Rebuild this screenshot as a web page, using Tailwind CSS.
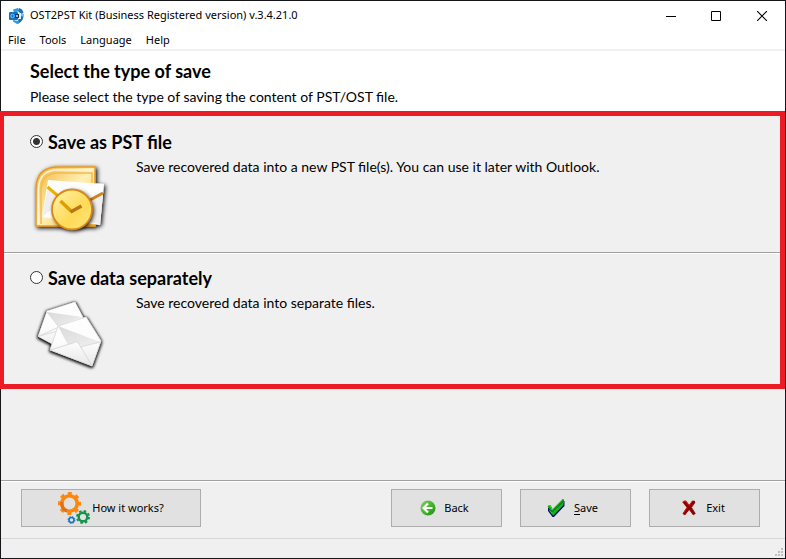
<!DOCTYPE html>
<html lang="en">
<head>
<meta charset="utf-8">
<title>OST2PST Kit</title>
<script src="https://cdn.jsdelivr.net/npm/@tailwindcss/browser@4"></script>
</head>
<body class="bg-[#f0f0f0] text-black">
<div class="flex min-h-screen flex-col border border-[#15151a] bg-[#f0f0f0] font-['Noto_Sans',sans-serif] text-[11px]">

  <header class="flex h-[29px] items-center bg-white pl-2">
    <svg class="size-4 shrink-0" viewBox="0 0 16 16" aria-hidden="true">
      <path d="M4 1.500 9 0l1 3-5 2zM4 12l5 1 1 2.500L8 16l-4-2.500z" fill="#2f9be0"/>
      <path d="M10 0q4 1 4.500 5L12 6 9 3zM14.500 8q0 5-5 7.500L9 12l3-4z" fill="#1673bd"/>
      <path d="M12 5.500 15 6v3l-3-1z" fill="#74bdea"/>
      <rect y="4" width="9" height="8" rx="1" fill="#0f72c6"/>
      <circle cx="3.500" cy="8" r="1.700" fill="none" stroke="#7ac4f5"/>
      <rect x="9" y="5" width="3" height="6" fill="#e4f0f8"/>
      <rect x="6" y="6" width="4" height="4" fill="#17365c"/>
      <path d="M7 7h2v2H7z" fill="#9cb4c8"/>
    </svg>
    <h1 class="ml-[5px] flex-1 whitespace-nowrap">OST2PST Kit (Business Registered version) v.3.4.21.0</h1>
    <div class="flex h-full">
      <button type="button" aria-label="Minimize" class="grid w-[45px] place-items-center">
        <svg width="10" height="10" viewBox="0 0 10 10"><path d="M0 5h10v1H0z"/></svg>
      </button>
      <button type="button" aria-label="Maximize" class="grid w-[46px] place-items-center">
        <svg width="10" height="10" viewBox="0 0 10 10"><path d="M.5.5h9v9h-9z" fill="none" stroke="#000"/></svg>
      </button>
      <button type="button" aria-label="Close" class="grid w-[46px] place-items-center">
        <svg width="10" height="10" viewBox="0 0 10 10"><path d="m0 0 10 10M10 0 0 10" fill="none" stroke="#000" stroke-width="1.100"/></svg>
      </button>
    </div>
  </header>

  <nav class="flex h-[21px] items-center gap-[14px] border-b-2 border-[#f0f0f0] bg-white pt-[2px] pl-[7px]" aria-label="Menu">
    <button type="button">File</button>
    <button type="button">Tools</button>
    <button type="button">Language</button>
    <button type="button">Help</button>
  </nav>

  <main class="flex flex-1 flex-col font-[Lato,sans-serif] text-[14px]">
    <div class="bg-white pt-2 pb-1 pl-[29px]">
      <h2 class="text-[18px] leading-6 font-bold">Select the type of save</h2>
      <p class="pt-1 leading-5 whitespace-nowrap">Please select the type of saving the content of PST/OST file.</p>
    </div>

    <div role="radiogroup" aria-label="Type of save" class="-ml-px border-x-[5px] border-y-[5px] border-l-4 border-[#ed1c24]">
      <section class="border-b border-[#a0a0a0] pt-[14px] pb-2 pl-[26px]">
        <div class="flex h-6 items-center gap-[5px]">
          <input id="pst" name="type" type="radio" checked aria-describedby="pst-d" class="mb-[2px] size-[13px] appearance-none rounded-full border border-[#333] bg-white bg-[radial-gradient(circle,#333_0_3px,#fff_4px)]">
          <label for="pst" class="text-[18px] leading-6 font-bold">Save as PST file</label>
        </div>
        <div class="flex">
          <div class="w-[106px] shrink-0">
            <svg class="h-[90px] w-20" viewBox="10 -1 80 90" aria-hidden="true">
              <defs>
                <linearGradient id="tile" x1="0" y1="0" x2="1" y2="1"><stop stop-color="#f2b43c"/><stop offset=".5" stop-color="#fff0b4"/><stop offset="1" stop-color="#f4b33a"/></linearGradient>
                <linearGradient id="face" x1="0" y1="0" x2="1" y2="1"><stop stop-color="#fff3a9"/><stop offset=".6" stop-color="#ffda57"/><stop offset="1" stop-color="#ffe982"/></linearGradient>
                <filter id="sh" x="-20%" y="-20%" width="150%" height="150%"><feDropShadow dx="1.500" dy="1.500" stdDeviation="2" flood-opacity="1"/></filter>
              </defs>
              <g filter="url(#sh)">
                <path d="M16 71V34Q16 12 38 12H75V71Z" fill="url(#tile)" stroke="#e79a22" stroke-width="1.500"/>
                <path d="M18.500 69V35Q18.500 15 38 15H73" fill="none" stroke="#fff6dd" stroke-width="1.500"/>
                <path d="M21 69V36Q21 18 39 18H72V28" fill="none" stroke="#f5bc4c" stroke-width="1.500"/>
                <path d="m28 25 56 4-4 41-58-8z" fill="#fdfdfd"/>
              </g>
              <path d="m28 33 16 12-22 17zM68 48l15-9-3 30-18-3z" fill="#f0eeee"/>
              <path d="m27.500 32 13 11" stroke="#edb100" stroke-width="3"/>
              <path d="m70 45 13-7" stroke="#cf831b" stroke-width="3"/>
              <g filter="url(#sh)"><circle cx="52" cy="54.500" r="20" fill="url(#face)"/></g>
              <circle cx="52" cy="54.500" r="20" fill="url(#face)" stroke="#db8615" stroke-width="1.800"/>
              <path d="m40.500 46 11 10.500" fill="none" stroke="#dba000" stroke-width="3.500"/>
              <path d="m50.500 57 11-6" stroke="#b97517" stroke-width="3.500"/>
            </svg>
          </div>
          <p id="pst-d" class="pt-[3px] leading-5 whitespace-nowrap">Save recovered data into a new PST file(s). You can use it later with Outlook.</p>
        </div>
      </section>
      <section class="border-t border-white pt-3 pb-1 pl-[26px]">
        <div class="flex h-6 items-center gap-[5px]">
          <input id="sep" name="type" type="radio" aria-describedby="sep-d" class="mb-[2px] size-[13px] appearance-none rounded-full border border-[#333] bg-white">
          <label for="sep" class="text-[18px] leading-6 font-bold">Save data separately</label>
        </div>
        <div class="flex">
          <div class="w-[106px] shrink-0">
            <svg class="h-[90px] w-20" viewBox="10 0 80 90" aria-hidden="true">
              <defs>
                <linearGradient id="fold" x1="0" y1="0" x2="1" y2="1"><stop stop-color="#dadada"/><stop offset="1" stop-color="#efefef"/></linearGradient>
                <linearGradient id="paper" x1="0" y1="0" x2="0" y2="1"><stop offset=".5" stop-color="#fdfdfd"/><stop offset="1" stop-color="#e8e8e8"/></linearGradient>
                <filter id="gl" x="-20%" y="-20%" width="140%" height="140%"><feMorphology in="SourceAlpha" operator="dilate" radius=".8"/><feGaussianBlur stdDeviation="1.600"/><feOffset dx=".3" dy=".8" result="s"/><feMerge><feMergeNode in="s"/><feMergeNode in="SourceGraphic"/></feMerge></filter>
              </defs>
              <g filter="url(#gl)">
                <path d="M27 21 55 12l8 15-16 35-29-15.500z" fill="url(#paper)"/>
                <path d="M38 36 66 27l15 24-9 25-42-16z" fill="url(#paper)"/>
              </g>
              <path d="m27 22 35 5-24 9z" fill="url(#fold)"/>
              <path d="m27 22 12 15-21 9.500 18-5" fill="none" stroke="#dcdcdc"/>
              <path d="M38 36 66 27l15 24-9 25-42-16z" fill="url(#paper)" stroke="#d4d4d4" stroke-width=".8"/>
              <path d="m38 36 42 16-18 4-6-4-8 3z" fill="url(#fold)"/>
              <path d="m30 60 23-7q4-3 6 1l13 22M60 57l20-5" fill="none" stroke="#dadada"/>
            </svg>
          </div>
          <p id="sep-d" class="pt-[3px] leading-5 whitespace-nowrap">Save recovered data into separate files.</p>
        </div>
      </section>
    </div>
  </main>

  <footer>
    <div class="border-t border-[#a0a0a0]">
      <div class="flex items-center border-t border-white pt-[7px] pr-[25px] pb-[11px] pl-5">
        <button type="button" class="flex h-[38px] w-[180px] items-center justify-center gap-[2px] border border-[#adadad] bg-[#e1e1e1]">
          <svg class="size-8" viewBox="0 0 32 32" aria-hidden="true">
            <g fill="none">
              <circle cx="11.500" cy="11.500" r="7.700" stroke="#ff860b" stroke-width="3.600"/>
              <circle cx="11.500" cy="11.500" r="10" stroke="#ff860b" stroke-width="3" stroke-dasharray="4 3.854" stroke-dashoffset="2"/>
              <path d="M4 10q-1 7 5 9" stroke="#dc711d" stroke-width="3"/>
              <circle cx="25" cy="25" r="4.300" stroke="#16944e" stroke-width="2.400"/>
              <circle cx="25" cy="25" r="6" stroke="#16944e" stroke-width="2" stroke-dasharray="2.500 2.212"/>
              <circle cx="13.500" cy="28" r="2.500" stroke="#1876bd" stroke-width="1.600"/>
              <circle cx="13.500" cy="28" r="3.500" stroke="#1876bd" stroke-width="1" stroke-dasharray="1.400 1.349"/>
            </g>
          </svg>
          <span>How it works?</span>
        </button>
        <div class="ml-auto flex gap-[18px]">
          <button type="button" class="flex h-[38px] w-[111px] items-center justify-center gap-2 border border-[#adadad] bg-[#e1e1e1] pr-[4px]">
            <svg class="size-4" viewBox="0 0 16 16" aria-hidden="true">
              <defs><linearGradient id="ball" x1="0" y1="0" x2="1" y2="1"><stop stop-color="#7ccf62"/><stop offset=".5" stop-color="#45b72b"/><stop offset="1" stop-color="#178f12"/></linearGradient></defs>
              <circle cx="8" cy="8" r="7.500" fill="url(#ball)"/>
              <path d="M8 3.500 3.500 8 8 12.500M4 8h8.500" fill="none" stroke="#fff" stroke-width="2.200"/>
            </svg>
            <span>Back</span>
          </button>
          <button type="button" class="flex h-[38px] w-[111px] items-center justify-center gap-[9px] border border-[#adadad] bg-[#e1e1e1] pr-[6px]">
            <svg class="h-5 w-[18px]" viewBox="0 0 18 20" aria-hidden="true">
              <path d="m1 10 3-1 2 4L16 3h1.500v5L7 19H5.500L1 13z" fill="#061070"/>
              <path d="m.5 8 3-1 2 4L15.500 1l1.500.5v2.300L6 15.500 4.500 15z" fill="#0b9b12"/>
              <path d="m1.500 11.500 2.500 1.500 2 2L16.500 4.500V7L6.500 17.500l-1.500-1z" fill="#12b018"/>
              <path d="m1 8 2-.5 2 4.500L15.500 1.500M2.500 12.500l3 2.500L16.500 4" fill="none" stroke="#2be52b"/>
              <path d="M2 11.500 5.500 14 16.500 3.500" fill="none" stroke="#045c0b" stroke-width=".7"/>
            </svg>
            <span><u class="underline-offset-2">S</u>ave</span>
          </button>
          <button type="button" class="flex h-[38px] w-[111px] items-center justify-center gap-[10px] border border-[#adadad] bg-[#e1e1e1] pr-[2px]">
            <svg class="h-4 w-[14px]" viewBox="0 0 14 16" aria-hidden="true">
              <path d="M1 1.500 4 .8l3.300 4L10.500.500l2.500.5v1.500L9.300 7.500l4 6-2.300 1.500-3.800-5L3 15.200.700 14l4-6.500L1 3z" fill="#900000"/>
              <path d="M1 3V1.500L3.500.800 7 5.500M1 13.500l4-6M7.500 5 10.500 1" fill="none" stroke="#e31414"/>
              <path d="m13 2.500-3.500 5 3.800 6-2.300 1.500" fill="none" stroke="#5d0505" stroke-width=".7"/>
            </svg>
            <span>Exit</span>
          </button>
        </div>
      </div>
    </div>
    <div class="flex h-5 items-end justify-end border-t border-[#d7d7d7] pr-[2px] pb-[2px]">
      <svg class="size-2" viewBox="0 0 8 8" fill="#bfbfbf" aria-hidden="true"><path d="M6 0h2v2H6zM3 3h2v2H3zM6 3h2v2H6zM0 6h2v2H0zM3 6h2v2H3zM6 6h2v2H6z"/></svg>
    </div>
  </footer>
</div>
</body>
</html>
